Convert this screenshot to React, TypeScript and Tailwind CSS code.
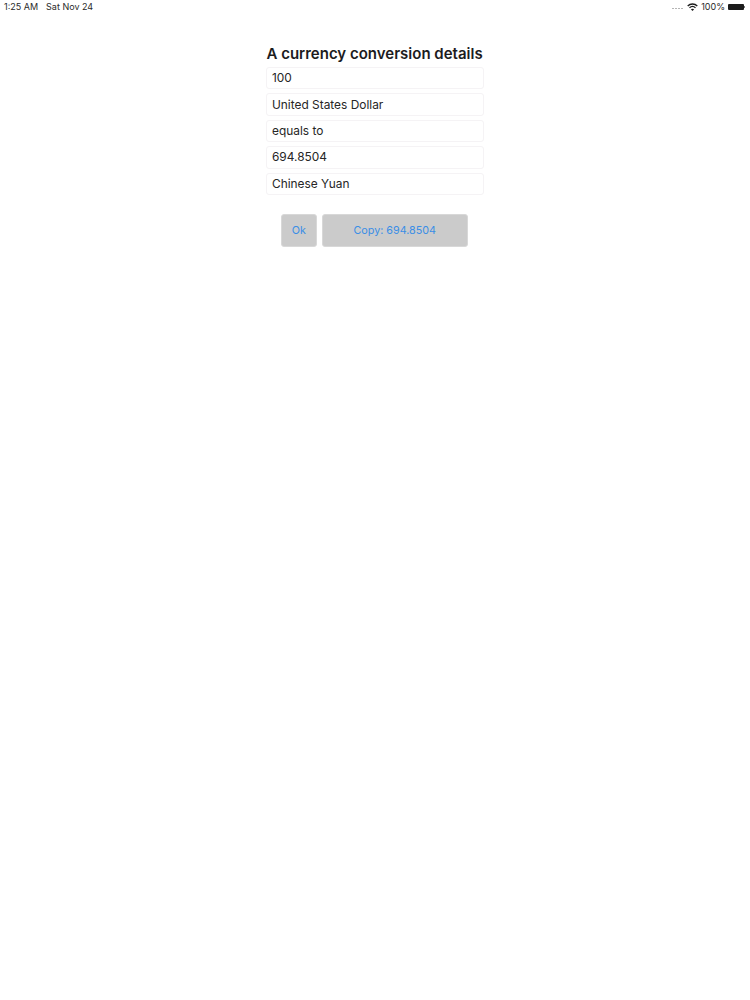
import React from "react";

const rows = ["100", "United States Dollar", "equals to", "694.8504", "Chinese Yuan"];

const StatusBar = () => (
  <div className="flex h-[14px] items-center justify-between pl-[4px] pr-[5px] text-[9px] text-[#2a2a2a]">
    <div className="flex gap-[8px]">
      <span>1:25 AM</span>
      <span>Sat Nov 24</span>
    </div>
    <div className="flex items-center">
      <div className="mr-[4px] flex gap-[1px] pt-[3px]">
        <span className="h-[1px] w-[2px] bg-[#b5b5b5]" />
        <span className="h-[1px] w-[2px] bg-[#b5b5b5]" />
        <span className="h-[1px] w-[2px] bg-[#b5b5b5]" />
        <span className="h-[1px] w-[2px] bg-[#b5b5b5]" />
      </div>
      <svg width="11" height="8" viewBox="0 0 11 8" fill="none" className="mr-[3px]">
        <path d="M0.7 3 C3.4 0.3 7.6 0.3 10.3 3" stroke="#1c1c1c" strokeWidth="1.3" />
        <path d="M2.5 4.8 C4.2 3.2 6.8 3.2 8.5 4.8" stroke="#1c1c1c" strokeWidth="1.3" />
        <path d="M5.5 8 L3.9 6.3 C4.8 5.5 6.2 5.5 7.1 6.3 Z" fill="#1c1c1c" />
      </svg>
      <span>100%</span>
      <div className="ml-[3px] h-[6px] w-[16px] rounded-[1px] bg-[#1c1c1c]" />
      <div className="h-[2px] w-[1px] bg-[#777777]" />
    </div>
  </div>
);

export default function App() {
  return (
    <div className="h-[1000px] w-[750px] bg-white font-['Inter','Liberation_Sans',sans-serif]">
      <StatusBar />
      <div className="mx-auto w-[218px] pt-[31px]">
        <h1 className="h-[17px] whitespace-nowrap pl-[0.5px] text-[15px] leading-[17px] font-semibold text-[#1c1c1e]">
          A currency conversion details
        </h1>
        <div className="mt-[5px] flex flex-col gap-[4px]">
          {rows.map((row) => (
            <div
              key={row}
              className="flex h-[22.4px] items-center rounded-[3px] border border-[#f5f3f5] px-[5px] text-[11.9px] text-[#262626]"
            >
              {row}
            </div>
          ))}
        </div>
        <div className="mt-[19px] flex gap-[4.5px] pl-[14.5px] text-[10.75px] text-[#3a8ee6]">
          <button className="h-[33px] w-[36.5px] rounded-[3px] border border-[#d8d8d8] bg-[#cbcbcb] pt-[1px]">Ok</button>
          <button className="h-[33px] w-[146.5px] rounded-[3px] border border-[#d8d8d8] bg-[#cbcbcb] pt-[1px]">Copy: 694.8504</button>
        </div>
      </div>
    </div>
  );
}
